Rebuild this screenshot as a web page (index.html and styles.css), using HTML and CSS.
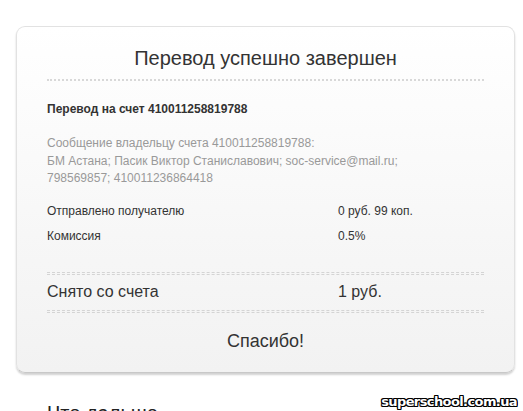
FILE: index.html
```html
<!DOCTYPE html>
<html lang="ru">
<head>
    <meta charset="UTF-8">
    <title>Перевод успешно завершен</title>
    <link rel="stylesheet" href="styles.css">
</head>
<body>
    <div class="card">
        <h1 class="title">Перевод успешно завершен</h1>
        <p class="account">Перевод на счет 410011258819788</p>
        <p class="message">Сообщение владельцу счета 410011258819788:<br>БМ Астана; Пасик Виктор Станиславович; soc-service@mail.ru;<br>798569857; 410011236864418</p>
        <div class="row">
            <span class="label">Отправлено получателю</span>
            <span class="value">0 руб. 99 коп.</span>
        </div>
        <div class="row">
            <span class="label">Комиссия</span>
            <span class="value">0.5%</span>
        </div>
        <div class="rule"></div>
        <div class="total">
            <span class="label">Снято со счета</span>
            <span class="value">1 руб.</span>
        </div>
        <div class="rule"></div>
        <p class="thanks">Спасибо!</p>
    </div>

    <h2 class="next">Что дальше</h2>
    <div class="watermark">superschool.com.ua</div>
</body>
</html>
```

FILE: styles.css
```css
body {
    margin: 0;
    background: white;
    color: #333;
    font-family: 'Liberation Sans', Arial, sans-serif;
    overflow: hidden;
    height: 411px;
    position: relative;
}
.card {
    margin: 26px 8px 0 16px;
    padding: 20px 30px 20px 30px;
    border: 1px solid #e2e2e2;
    border-bottom-color: #c8c8c8;
    border-radius: 9px;
    background: linear-gradient(to bottom, #ffffff 0%, #f7f7f7 60%, #f2f2f2 100%);
    box-shadow: 0 2px 2px rgba(0, 0, 0, 0.18);
}
.title {
    margin: 0;
    padding-bottom: 9px;
    font-size: 20px;
    font-weight: normal;
    text-align: center;
    border-bottom: 2px dotted #d8d8d8;
}
.account {
    margin: 21px 0 0;
    font-size: 12px;
    font-weight: bold;
}
.message {
    margin: 19px 0 0;
    font-size: 12px;
    line-height: 17.5px;
    color: #999;
}
.row {
    display: flex;
    font-size: 12px;
    line-height: 25px;
}
.message + .row {
    margin-top: 11px;
}
.label {
    width: 291px;
}
.rule {
    height: 1px;
    border-top: 1px dashed #d4d4d4;
    border-bottom: 1px dashed #d4d4d4;
}
.row + .rule {
    margin-top: 23px;
}
.total {
    display: flex;
    padding: 4px 0 5px;
    font-size: 16px;
    line-height: 26px;
}
.thanks {
    margin: 18px 0 0;
    font-size: 18px;
    text-align: center;
}
.next {
    margin: 29px 0 0 47px;
    font-size: 20px;
    font-weight: normal;
    color: #222;
}
.watermark {
    position: absolute;
    right: 6px;
    bottom: 2px;
    font-family: 'DejaVu Sans', sans-serif;
    font-weight: bold;
    font-size: 13px;
    letter-spacing: -0.6px;
    color: white;
    text-shadow: -1px -1px 0 #000, 1px -1px 0 #000, -1px 1px 0 #000, 1px 1px 0 #000, 0 1px 0 #000, 0 -1px 0 #000, 1px 0 0 #000, -1px 0 0 #000;
}
```
